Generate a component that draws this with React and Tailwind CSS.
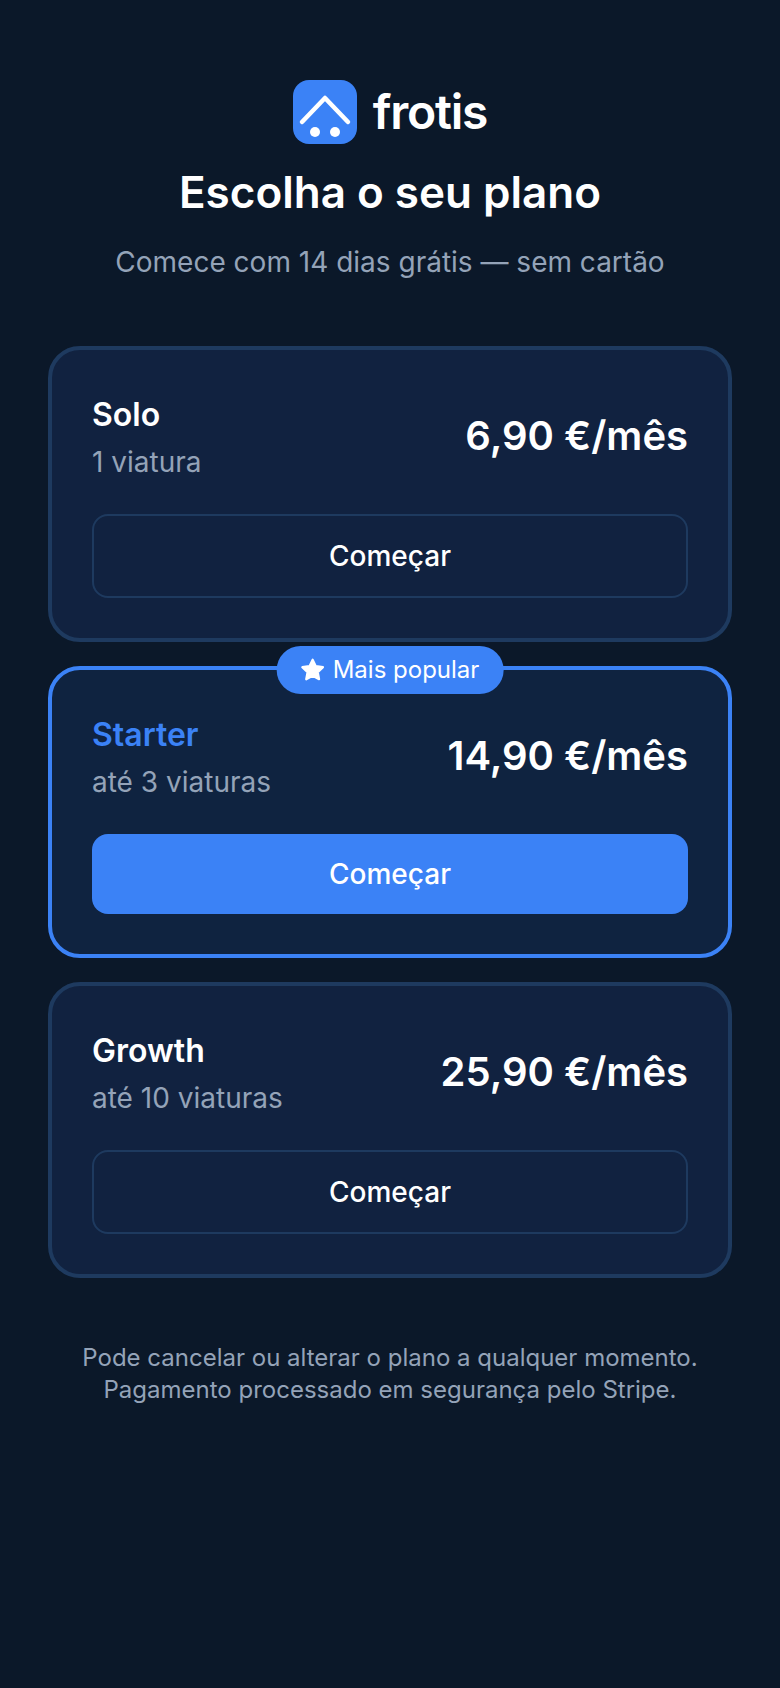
const plans = [
  { name: "Solo", desc: "1 viatura", price: "6,90 €/mês" },
  { name: "Starter", desc: "até 3 viaturas", price: "14,90 €/mês", popular: true },
  { name: "Growth", desc: "até 10 viaturas", price: "25,90 €/mês" },
];

function Logo() {
  return (
    <svg width="64" height="64" viewBox="0 0 64 64" className="shrink-0">
      <rect width="64" height="64" rx="16" fill="#3b82f6" />
      <path d="M9 42 L32 18 L55 42" fill="none" stroke="#fff" strokeWidth="4.500" strokeLinecap="round" strokeLinejoin="round" />
      <circle cx="22" cy="52" r="5" fill="#fff" />
      <circle cx="42" cy="52" r="5" fill="#fff" />
    </svg>
  );
}

function Star() {
  return (
    <svg width="24" height="24" viewBox="1 1 22 22" fill="#fff" stroke="#fff" strokeWidth="2" strokeLinejoin="round">
      <path d="M12 2.500l2.900 6 6.600.9-4.800 4.600 1.200 6.500-5.900-3.200-5.900 3.200 1.200-6.500L2.500 9.400l6.600-.9z" />
    </svg>
  );
}

function PlanCard({ plan }) {
  return (
    <div
      className={`relative rounded-[32px] border-4 p-10 ${
        plan.popular ? "border-[#3b82f6] bg-[#0f2340]" : "border-[#1e3a5f] bg-[#112240]"
      }`}
    >
      {plan.popular && (
        <div className="absolute left-1/2 top-[-24px] flex h-12 -translate-x-1/2 items-center gap-2 rounded-full bg-[#3b82f6] px-6 text-2xl whitespace-nowrap text-white">
          <Star />
          Mais popular
        </div>
      )}
      <div className="flex items-center justify-between">
        <div>
          <div className={`text-[32px] leading-[50px] font-semibold ${plan.popular ? "text-[#3b82f6]" : "text-white"}`}>
            {plan.name}
          </div>
          <div className="text-[28px] leading-[44px] text-[#94a3b8]">{plan.desc}</div>
        </div>
        <div className="pb-0.5 text-[40px] leading-[56px] font-semibold text-white">{plan.price}</div>
      </div>
      <button
        className={`mt-[30px] flex w-full items-center justify-center rounded-2xl text-[28px] font-medium text-white ${
          plan.popular ? "h-20 bg-[#3b82f6]" : "h-[84px] border-2 border-[#1e3a5f] bg-transparent"
        }`}
      >
        Começar
      </button>
    </div>
  );
}

export default function App() {
  return (
    <div className="flex min-h-[1688px] flex-col items-center bg-[#0b1829] px-12 pt-20 font-['Inter',sans-serif]">
      <div className="flex items-center gap-4">
        <Logo />
        <span className="text-[48px] leading-[64px] font-semibold tracking-tight text-white">frotis</span>
      </div>
      <h1 className="mt-[18px] text-[44px] leading-[60px] font-semibold text-white">Escolha o seu plano</h1>
      <p className="mt-5 text-[28px] leading-[40px] text-[#94a3b8]">Comece com 14 dias grátis — sem cartão</p>
      <div className="mt-[64px] flex w-full flex-col gap-6">
        {plans.map((plan) => (
          <PlanCard key={plan.name} plan={plan} />
        ))}
      </div>
      <p className="mt-16 text-center text-[24px] leading-[32px] text-[#94a3b8]">
        Pode cancelar ou alterar o plano a qualquer momento.
        <br />
        Pagamento processado em segurança pelo Stripe.
      </p>
    </div>
  );
}
